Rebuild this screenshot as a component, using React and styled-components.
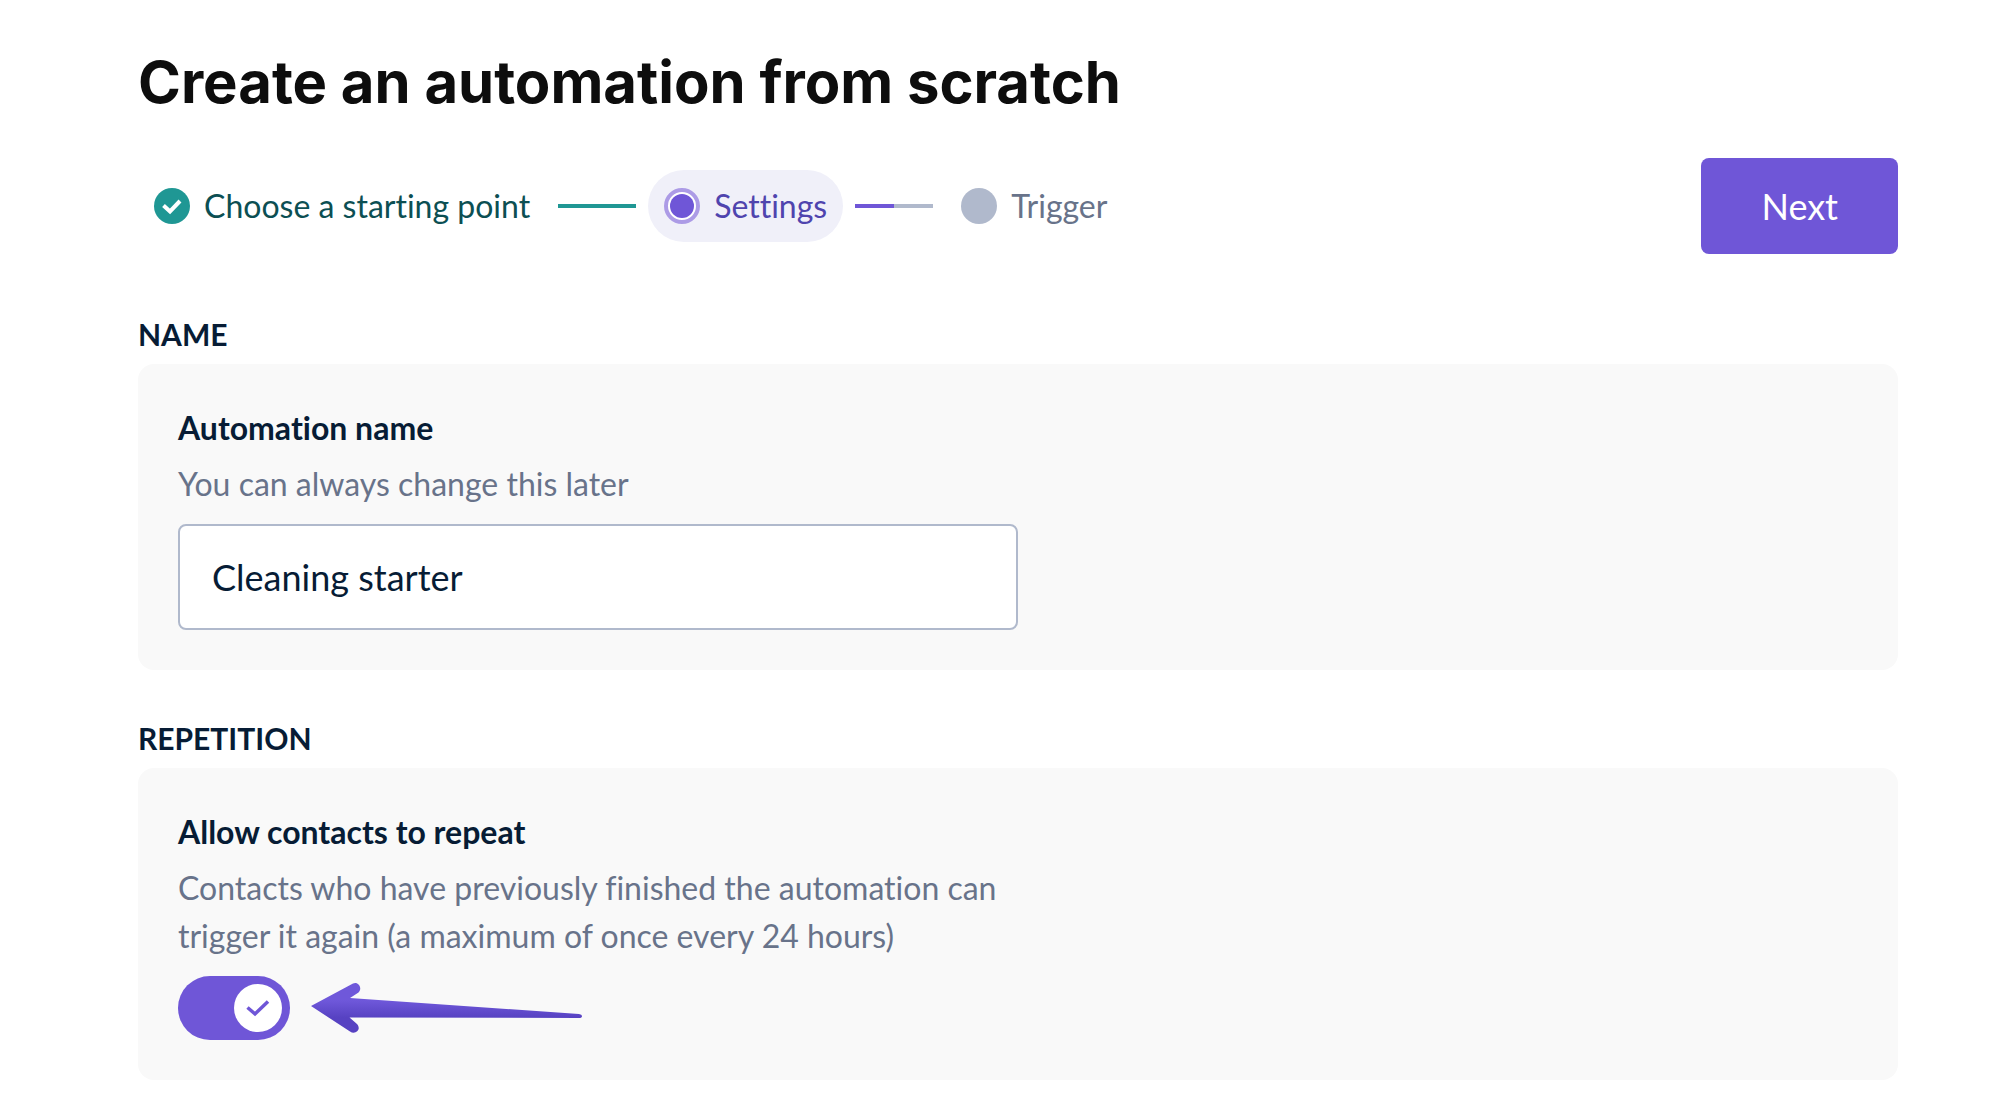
import React, { useState } from 'react'
import styled, { createGlobalStyle } from 'styled-components'

const GlobalStyle = createGlobalStyle`
  * {
    box-sizing:border-box;
  }
  body {
    margin:0;
    background-color:#ffffff;
    color:#071c35;
    font-family:Lato, "Liberation Sans", sans-serif;
    font-size:32px;
    font-variant-ligatures:none;
    line-height:48px;
  }
`

const Page = styled.main`
  padding:46px 100px 28px 138px;
`

const Title = styled.h1`
  margin:0 0 40px;
  color:#0d0d0d;
  font-family:Inter, "Liberation Sans", sans-serif;
  font-size:58px;
  font-weight:700;
  line-height:72px;
`

const Toolbar = styled.div`
  display:flex;
  align-items:center;
  justify-content:space-between;
  margin-bottom:60px;
`

const Steps = styled.ol`
  display:flex;
  align-items:center;
  gap:12px;
  margin:0;
  padding:0;
  list-style:none;
`

const stepColors = {
  done: '#0c4f53',
  current: '#4f44ae',
  upcoming: '#68738a'
}

const Step = styled.li`
  display:flex;
  align-items:center;
  gap:14px;
  padding:12px 16px;
  border-radius:36px;
  color:${props => stepColors[props.$state]};
  background-color:${props => props.$state === 'current' ? '#f0f0f9' : 'transparent'};
`

const StepIcon = styled.svg`
  width:36px;
  height:36px;
`

const StepLine = styled.li`
  width:78px;
  height:4px;
  background:${props => props.$half
    ? 'linear-gradient(to right, #6f56d7 50%, #b0b9cc 50%)'
    : '#1f9794'};
`

const NextButton = styled.button`
  padding:24px 60px;
  border:0;
  border-radius:8px;
  background-color:#6f56d7;
  color:#ffffff;
  font-family:inherit;
  font-size:36px;
  line-height:48px;
  cursor:pointer;
`

const Section = styled.section`
  margin-bottom:48px;

  &:last-child {
    margin-bottom:0;
  }
`

const SectionTitle = styled.h2`
  margin:0 0 10px;
  font-size:30px;
  font-weight:700;
  line-height:40px;
`

const Card = styled.div`
  padding:40px;
  border-radius:16px;
  background-color:#f9f9f9;
`

const Label = styled.label`
  display:block;
  font-weight:700;
`

const Hint = styled.p`
  width:50%;
  margin:8px 0 16px;
  color:#68738a;
`

const TextInput = styled.input`
  display:block;
  width:50%;
  padding:27px 32px;
  border:2px solid #b0b9cc;
  border-radius:8px;
  background-color:#ffffff;
  color:#071c35;
  font-family:inherit;
  font-size:36px;
  line-height:48px;
`

const ToggleRow = styled.div`
  display:flex;
  gap:20px;
`

const Toggle = styled.span`
  position:relative;
  display:flex;
`

const ToggleInput = styled.input`
  appearance:none;
  width:112px;
  height:64px;
  margin:0;
  border-radius:32px;
  background-color:${props => props.checked ? '#6f56d7' : '#b0b9cc'};
  cursor:pointer;
`

const Knob = styled.svg`
  position:absolute;
  top:8px;
  left:${props => props.$on ? '56px' : '8px'};
  width:48px;
  height:48px;
  pointer-events:none;
`

const Arrow = styled.svg`
  width:274px;
  height:64px;
`

const DoneIcon = () => (
  <StepIcon viewBox='0 0 36 36' aria-hidden='true'>
    <circle cx='18' cy='18' r='18' fill='#1f9794' />
    <path d='M9.500 17.500L16 23.500L26 13' fill='none' stroke='#ffffff' strokeWidth='4' />
  </StepIcon>
)

const CurrentIcon = () => (
  <StepIcon viewBox='0 0 36 36' aria-hidden='true'>
    <circle cx='18' cy='18' r='16' fill='#ffffff' stroke='#ac9be6' strokeWidth='4' />
    <circle cx='18' cy='18' r='12' fill='#6f56d7' />
  </StepIcon>
)

const UpcomingIcon = () => (
  <StepIcon viewBox='0 0 36 36' aria-hidden='true'>
    <circle cx='18' cy='18' r='18' fill='#b0b9cc' />
  </StepIcon>
)

const PointerArrow = () => (
  <Arrow viewBox='0 0 274 64' aria-hidden='true'>
    <defs>
      <linearGradient id='arrow-fill' x1='0' y1='0' x2='0' y2='1'>
        <stop offset='0.35' stopColor='#6f58da' />
        <stop offset='0.7' stopColor='#5742c2' />
      </linearGradient>
    </defs>
    <path
      d='M1 30L43 7.500C48 5 53 12 48.500 16.500L40 22L269 38Q272 38.500 272 40Q272 42 269 42L39.500 41.500L47 48C52 54 45 59 40 55.500Z'
      fill='url(#arrow-fill)'
    />
  </Arrow>
)

export default function App () {
  const [name, setName] = useState('Cleaning starter')
  const [repeat, setRepeat] = useState(true)

  return (
    <Page>
      <GlobalStyle />
      <Title>Create an automation from scratch</Title>
      <Toolbar>
        <Steps>
          <Step $state='done'><DoneIcon />Choose a starting point</Step>
          <StepLine aria-hidden='true' />
          <Step $state='current' aria-current='step'><CurrentIcon />Settings</Step>
          <StepLine $half aria-hidden='true' />
          <Step $state='upcoming'><UpcomingIcon />Trigger</Step>
        </Steps>
        <NextButton type='button'>Next</NextButton>
      </Toolbar>

      <Section>
        <SectionTitle>NAME</SectionTitle>
        <Card>
          <Label htmlFor='automation-name'>Automation name</Label>
          <Hint>You can always change this later</Hint>
          <TextInput
            id='automation-name'
            type='text'
            value={name}
            onChange={e => setName(e.target.value)}
          />
        </Card>
      </Section>

      <Section>
        <SectionTitle>REPETITION</SectionTitle>
        <Card>
          <Label htmlFor='allow-repeat'>Allow contacts to repeat</Label>
          <Hint>
            Contacts who have previously finished the automation can trigger it again (a maximum of once every 24 hours)
          </Hint>
          <ToggleRow>
            <Toggle>
              <ToggleInput
                id='allow-repeat'
                type='checkbox'
                checked={repeat}
                onChange={e => setRepeat(e.target.checked)}
              />
              <Knob $on={repeat} viewBox='0 0 48 48' aria-hidden='true'>
                <circle cx='24' cy='24' r='24' fill='#ffffff' />
                {repeat && <path d='M13.500 23.500L21 30L34 17.500' fill='none' stroke='#6f56d7' strokeWidth='3.500' />}
              </Knob>
            </Toggle>
            <PointerArrow />
          </ToggleRow>
        </Card>
      </Section>
    </Page>
  )
}
